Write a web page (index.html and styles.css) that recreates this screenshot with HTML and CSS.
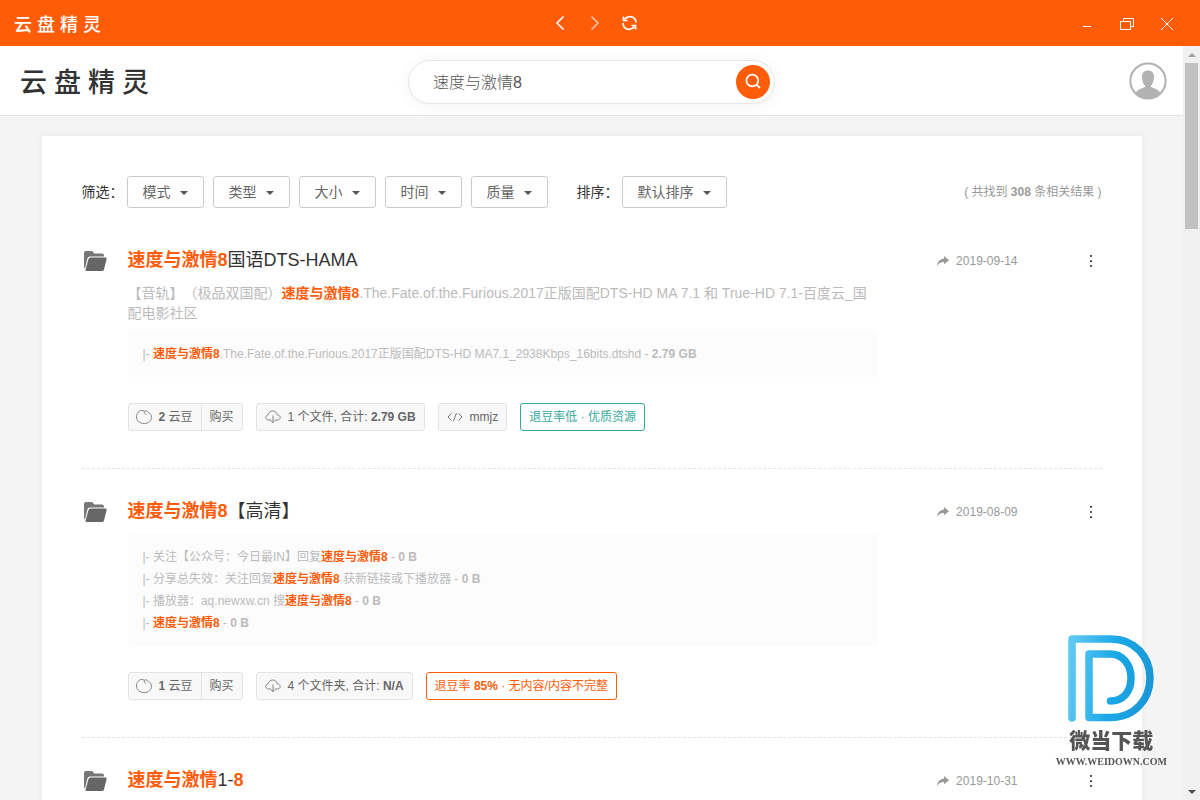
FILE: index.html
```html
<!DOCTYPE html>
<html lang="zh-CN">
<head>
<meta charset="utf-8">
<meta name="viewport" content="width=device-width, initial-scale=1">
<title>云盘精灵</title>
<link rel="stylesheet" href="styles.css">
</head>
<body>
<svg class="defs" aria-hidden="true">
  <symbol id="folder" viewBox="0 0 24 22">
    <path d="M1 3Q1 1 3 1H8.500Q10 1 10.500 2.500L11 3.500H19Q21 3.500 21 5.500V6.500H7Q5 6.500 4.400 8.400L2 18.500Q1 18 1 16.500Z" fill="#777"/>
    <path d="M7.500 7.500H22.500Q24 7.500 23.600 9L21 19.500Q20.600 21 19 21H3.500Q2.200 21 2.600 19.500L5.500 9Q6 7.500 7.500 7.500Z" fill="#666"/>
  </symbol>
  <symbol id="share" viewBox="0 0 12 10">
    <path d="M7 0L12 4.300L7 8.300V6Q2.500 5.700 0 10Q.6 3 7 2.500Z" fill="#999"/>
  </symbol>
  <symbol id="bean" viewBox="0 0 16 14">
    <path d="M8.300 1.300C9.500 .4 11.500 .8 12.300 2.600C14.300 3.200 15.500 5 15.500 7.300C15.500 11 12.500 13.500 8.300 13.500C4 13.500.5 11 .5 7C.5 3.200 2.900.5 5.800.5C6.800.5 7.700 .8 8.300 1.300ZM8.300 1.500C8 3 9 4.400 10.300 4.500" fill="none" stroke="#777" stroke-width=".9"/>
  </symbol>
  <symbol id="cloud" viewBox="0 0 16 14">
    <path d="M6 10H3.700C2 10 .8 9 .8 7.500C.8 6.100 1.800 5.100 3.200 4.900C3.500 2.500 5.400 1 7.700 1C10.100 1 11.900 2.600 12.100 4.800C13.900 4.900 15.200 6 15.200 7.500C15.200 9 14.100 10 12.300 10H10M8 5.500V12.500M5.600 10.300L8 12.700L10.400 10.300" fill="none" stroke="#777" stroke-width=".9"/>
  </symbol>
  <symbol id="code" viewBox="0 0 16 10">
    <path d="M4.500 1.500L1 5L4.500 8.500M11.500 1.500L15 5L11.500 8.500M9.500 1L6.500 9" fill="none" stroke="#777"/>
  </symbol>
</svg>

<header class="titlebar">
  <div class="brand brand-small"><span>云</span><span>盘</span><span>精</span><span>灵</span></div>
  <nav class="history">
    <button aria-label="后退"><svg width="16" height="16" viewBox="0 0 16 16"><path d="M11.500 1.500L5 8L11.500 14.500" fill="none" stroke="#fff" stroke-width="1.600"/></svg></button>
    <button aria-label="前进"><svg width="16" height="16" viewBox="0 0 16 16"><path d="M4.500 1.500L11 8L4.500 14.500" fill="none" stroke="#f5c8b0" stroke-width="1.500"/></svg></button>
    <button aria-label="刷新"><svg width="16" height="16" viewBox="0 0 16 16"><path d="M2.500 4.500C5 1 10.500.6 13 4Q14 5.500 14 7.500M1 8Q1 10 2 11.700C4.500 15.400 10 15 12.500 11.500" fill="none" stroke="#fff" stroke-width="1.700"/><path d="M1.500 1.500V5.500H5.500M13.500 14.500V10.500H9.500" fill="none" stroke="#fff" stroke-width="1.700"/></svg></button>
  </nav>
  <div class="window-controls">
    <button aria-label="最小化"><svg width="16" height="16" viewBox="0 0 16 16"><path d="M4 11.500H12" stroke="#fff"/></svg></button>
    <button aria-label="还原"><svg width="16" height="16" viewBox="0 0 16 16"><path d="M1.500 6.500H11.500V14.500H1.500ZM4.500 6V3.500H14.500V11.500H12" fill="none" stroke="#fff"/></svg></button>
    <button aria-label="关闭"><svg width="16" height="16" viewBox="0 0 16 16"><path d="M2 3L14 15M14 3L2 15" stroke="#fff"/></svg></button>
  </div>
</header>

<div class="viewport">
  <div class="page">
    <div class="topbar">
      <div class="brand brand-large"><span>云</span><span>盘</span><span>精</span><span>灵</span></div>
      <form class="search">
        <input type="text" value="速度与激情8" aria-label="搜索">
        <button type="button" aria-label="搜索"><svg width="18" height="18" viewBox="0 0 18 18"><circle cx="8.300" cy="7.500" r="5.900" fill="none" stroke="#fff" stroke-width="1.700"/><path d="M12.500 11.500L16 15" stroke="#fff" stroke-width="1.800"/></svg></button>
      </form>
      <button class="avatar" aria-label="用户"><svg width="38" height="38" viewBox="0 0 38 38"><circle cx="19" cy="19" r="17.600" fill="#fff" stroke="#b2b2b2" stroke-width="2"/><path d="M19 8.500C22.500 8.500 25 10.500 25 14.500C25 19 23.500 22.500 21.700 23.700Q21.500 25 23 25.500Q29 27 31.600 31.200A17.500 17.500 0 0 1 6.400 31.200Q9 27 15 25.500Q16.500 25 16.300 23.700C14.500 22.500 13 19 13 14.500C13 10.500 15.500 8.500 19 8.500Z" fill="#b2b2b2"/></svg></button>
    </div>

    <main class="card">
      <div class="filters">
        <span class="filter-label">筛选：</span>
        <div class="filter-group">
          <span class="dropdown"><select aria-label="模式"><option>模式</option></select></span>
          <span class="dropdown"><select aria-label="类型"><option>类型</option></select></span>
          <span class="dropdown"><select aria-label="大小"><option>大小</option></select></span>
          <span class="dropdown"><select aria-label="时间"><option>时间</option></select></span>
          <span class="dropdown"><select aria-label="质量"><option>质量</option></select></span>
        </div>
        <label class="filter-label" for="sort">排序：</label>
        <span class="dropdown"><select id="sort"><option>默认排序</option></select></span>
        <span class="count">( 共找到 <b>308</b> 条相关结果 )</span>
      </div>

      <article class="item">
        <svg class="folder" width="24" height="22"><use href="#folder"/></svg>
        <div class="item-body">
          <h2><a href="#"><em>速度与激情8</em>国语DTS-HAMA</a></h2>
          <p class="desc">【音轨】（极品双国配）<em>速度与激情8</em>.The.Fate.of.the.Furious.2017正版国配DTS-HD MA 7.1 和 True-HD 7.1-百度云_国配电影社区</p>
          <ul class="files">
            <li>|- <em>速度与激情8</em>.The.Fate.of.the.Furious.2017正版国配DTS-HD MA7.1_2938Kbps_16bits.dtshd - <b>2.79 GB</b></li>
          </ul>
          <div class="tags">
            <div class="tag tag-buy"><span class="price"><svg width="16" height="14"><use href="#bean"/></svg><span><b>2</b> 云豆</span></span><button>购买</button></div>
            <div class="tag"><svg width="16" height="14"><use href="#cloud"/></svg><span>1 个文件, 合计: <b>2.79 GB</b></span></div>
            <div class="tag"><svg width="16" height="10"><use href="#code"/></svg><span>mmjz</span></div>
            <div class="tag tag-good">退豆率低 · 优质资源</div>
          </div>
        </div>
        <div class="meta"><svg width="12" height="10"><use href="#share"/></svg><time>2019-09-14</time></div>
        <button class="more" aria-label="更多"><i></i><i></i><i></i></button>
      </article>

      <article class="item">
        <svg class="folder" width="24" height="22"><use href="#folder"/></svg>
        <div class="item-body">
          <h2><a href="#"><em>速度与激情8</em>【高清】</a></h2>
          <ul class="files">
            <li>|- 关注【公众号：今日最IN】回复<em>速度与激情8</em> - <b>0 B</b></li>
            <li>|- 分享总失效：关注回复<em>速度与激情8</em> 获新链接或下播放器 - <b>0 B</b></li>
            <li>|- 播放器：aq.newxw.cn 搜<em>速度与激情8</em> - <b>0 B</b></li>
            <li>|- <em>速度与激情8</em> - <b>0 B</b></li>
          </ul>
          <div class="tags">
            <div class="tag tag-buy"><span class="price"><svg width="16" height="14"><use href="#bean"/></svg><span><b>1</b> 云豆</span></span><button>购买</button></div>
            <div class="tag"><svg width="16" height="14"><use href="#cloud"/></svg><span>4 个文件夹, 合计: <b>N/A</b></span></div>
            <div class="tag tag-bad"><span>退豆率 <b>85%</b> · 无内容/内容不完整</span></div>
          </div>
        </div>
        <div class="meta"><svg width="12" height="10"><use href="#share"/></svg><time>2019-08-09</time></div>
        <button class="more" aria-label="更多"><i></i><i></i><i></i></button>
      </article>

      <article class="item">
        <svg class="folder" width="24" height="22"><use href="#folder"/></svg>
        <div class="item-body">
          <h2><a href="#"><em>速度与激情</em>1-<em>8</em></a></h2>
        </div>
        <div class="meta"><svg width="12" height="10"><use href="#share"/></svg><time>2019-10-31</time></div>
        <button class="more" aria-label="更多"><i></i><i></i><i></i></button>
      </article>
    </main>
  </div>

  <div class="scrollbar">
    <span class="arrow arrow-up"></span>
    <span class="track"><span class="thumb"></span></span>
    <span class="arrow arrow-down"></span>
  </div>
</div>

<div class="watermark">
  <svg width="88" height="88" viewBox="0 0 88 88">
    <defs><linearGradient id="blue" gradientUnits="userSpaceOnUse" x1="0" y1="40" x2="88" y2="50"><stop offset="0" stop-color="#60c9f3"/><stop offset=".5" stop-color="#1ba9e8"/><stop offset="1" stop-color="#1995d5"/></linearGradient></defs>
    <path d="M5 83V4H44C67 4 83 21 83 43C83 65 67 82.500 44 82.500H22V19H43C56 19 64 30 64 43C64 57 56 66 43.500 66" fill="none" stroke="url(#blue)" stroke-width="7.500" stroke-linecap="round" stroke-linejoin="round"/>
  </svg>
  <strong>微当下载</strong>
  <span>WWW.WEIDOWN.COM</span>
</div>
</body>
</html>
```
FILE: styles.css
```css
* { box-sizing: border-box; }
body {
  margin: 0;
  height: 100vh;
  display: flex;
  flex-direction: column;
  overflow: hidden;
  background: #f4f4f4;
  color: #333;
  font: 14px/20px "Liberation Sans", "Noto Sans CJK SC", sans-serif;
  text-spacing-trim: space-all;
}
button, input, select { font: inherit; color: inherit; margin: 0; padding: 0; border: 0; background: none; outline: 0; }
svg { display: block; flex: none; }
em { color: #ff5c0a; font-style: normal; font-weight: bold; }
.defs { position: absolute; width: 0; height: 0; }

.titlebar {
  flex: none;
  height: 46px;
  padding: 0 13px;
  display: grid;
  grid-template-columns: 1fr auto 1fr;
  align-items: center;
  background: #ff5c08;
}
.brand { display: flex; font-family: "Noto Sans CJK SC", sans-serif; font-weight: 500; }
.brand-small { gap: 5px; padding-left: 1px; color: #fff; font-size: 18px; line-height: 24px; }
.brand-large { gap: 7px; padding-left: 4px; font-size: 27px; line-height: 36px; }
.history { display: flex; gap: 11px; padding-right: 10px; }
.history button { width: 24px; height: 24px; display: grid; place-items: center; }
.window-controls { display: flex; justify-content: flex-end; }
.window-controls button { width: 40px; height: 46px; display: grid; place-items: center; }

.viewport { flex: 1; min-height: 0; display: flex; }
.page { flex: 1; min-width: 0; overflow: hidden; }
.topbar {
  height: 70px;
  padding: 0 16px;
  display: grid;
  grid-template-columns: 1fr auto 1fr;
  align-items: center;
  background: #fff;
  border-bottom: 1px solid #e6e6e6;
}
.search {
  width: 367px;
  height: 44px;
  padding: 0 4px 0 24px;
  display: flex;
  align-items: center;
  border: 1px solid #e6e6e6;
  border-radius: 22px;
  background: #fff;
  box-shadow: 0 2px 16px rgba(0, 0, 0, .05);
  margin-top: 3px;
}
.search input { flex: 1; min-width: 0; padding-top: 2px; font-size: 16px; font-weight: 300; color: #555; }
.search button { width: 34px; height: 34px; border-radius: 50%; background: #ff5c08; display: grid; place-items: center; }
.avatar { justify-self: end; }

.card {
  max-width: 1100px;
  min-height: 100%;
  margin: 20px auto 0;
  padding: 40px 40px;
  background: #fff;
  box-shadow: 0 0 6px rgba(0, 0, 0, .06);
}
.filters { display: flex; align-items: center; margin-bottom: 10px; }
.filter-label { width: 45px; white-space: nowrap; }
.filter-group { display: flex; gap: 9px; margin-right: 29px; }
.dropdown { position: relative; display: flex; }
.dropdown::after {
  content: "";
  position: absolute;
  right: 16px;
  top: 15px;
  border: 4px solid transparent;
  border-top-color: #555;
  border-bottom: 0;
  pointer-events: none;
}
.dropdown select {
  appearance: none;
  height: 32px;
  padding: 0 32px 0 15px;
  border: 1px solid #ccc;
  border-radius: 3px;
  color: #666;
}
.count { margin-left: auto; font-size: 12px; color: #999; }

.item {
  display: grid;
  grid-template-columns: 46px minmax(0, 750px) 1fr 22px;
  padding: 30px 0 37px;
  border-bottom: 1px dashed #e4e4e4;
}
.folder { margin: 2px 0 0 1px; }
.item h2 { margin: 0 0 11px; font-size: 18px; line-height: 24px; font-weight: normal; }
.item h2 a { color: inherit; text-decoration: none; }
.desc { margin: 0 0 8px; color: #bbb; }
.files {
  margin: 0 0 26px;
  padding: 12px 15px;
  list-style: none;
  border-radius: 4px;
  background: #fcfcfc;
  color: #bbb;
  font-size: 12px;
  line-height: 22px;
}
.tags { display: flex; gap: 13px; font-size: 12px; color: #666; }
.tag {
  height: 28px;
  padding: 0 8px;
  display: flex;
  align-items: center;
  gap: 7px;
  border: 1px solid #e4e4e4;
  border-radius: 3px;
  background: #f8f8f8;
  white-space: nowrap;
}
.tag-buy { padding: 0; gap: 0; }
.tag-buy .price { height: 100%; padding: 0 8px 0 7px; display: flex; align-items: center; gap: 7px; }
.tag-buy button { height: 100%; padding: 0 8px; border-left: 1px solid #e4e4e4; }
.tag-good { border-color: #35a99b; color: #35a99b; background: #fff; }
.tag-bad { border-color: #ff5c08; color: #ff5c08; background: #fff; }
.meta { height: 26px; display: flex; align-items: center; justify-content: flex-end; gap: 7px; padding-right: 62px; font-size: 12px; color: #999; }
.more { height: 26px; display: flex; flex-direction: column; align-items: center; justify-content: center; gap: 3px; }
.more i { width: 2px; height: 2px; background: #555; }

.scrollbar { flex: none; width: 17px; display: flex; flex-direction: column; background: #f0f0f0; }
.track { flex: 1; padding: 0 2px; }
.thumb { display: block; height: 23%; background: #c1c1c1; }
.arrow { height: 17px; display: grid; place-items: center; }
.arrow::before { content: ""; border: 4px solid transparent; }
.arrow-up::before { border-top: 0; border-bottom-color: #a0a0a0; }
.arrow-down::before { border-bottom: 0; border-top-color: #505050; }

.watermark {
  position: fixed;
  right: 33px;
  bottom: 31px;
  display: flex;
  flex-direction: column;
  align-items: center;
  color: #555;
  pointer-events: none;
}
.watermark strong { font: 900 21px/32px "Noto Sans CJK SC", sans-serif; }
.watermark span { font: bold 10px/14px "Liberation Serif", serif; }
```
